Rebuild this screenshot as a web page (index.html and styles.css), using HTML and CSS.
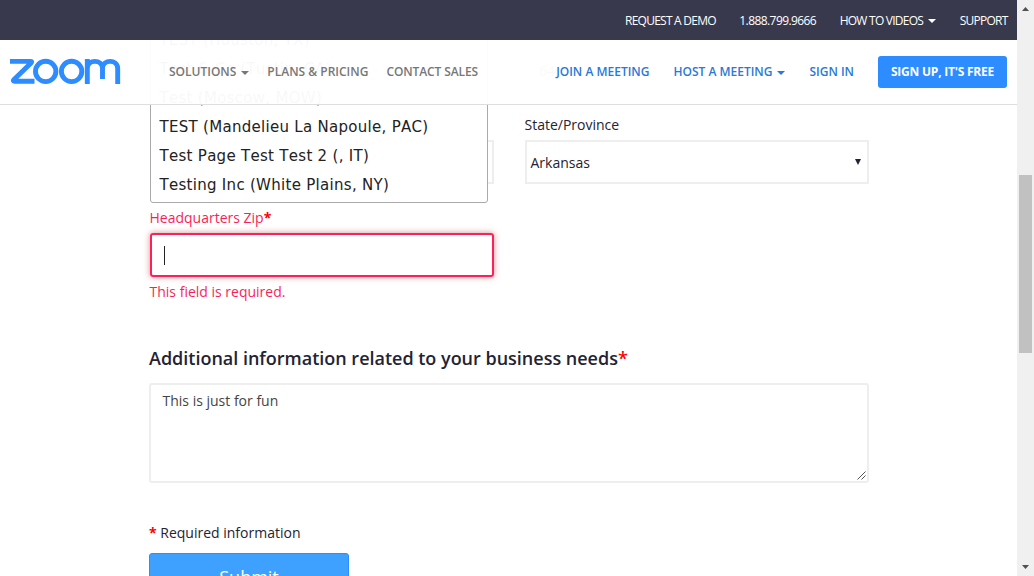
FILE: index.html
```html
<!DOCTYPE html>
<html lang="en">
<head>
<meta charset="utf-8">
<title>Zoom - Contact Sales</title>
<link rel="stylesheet" href="styles.css">
</head>
<body>
<div class="window">
  <div class="page">
    <header class="site-header">
      <nav class="topbar">
        <a class="demo">REQUEST A DEMO</a>
        <a class="phone">1.888.799.9666</a>
        <a class="videos">HOW TO VIDEOS<i class="caret"></i></a>
        <a class="support">SUPPORT</a>
      </nav>
      <nav class="navbar">
        <svg class="logo" viewBox="0 0 112 28" fill="none" stroke="#2d8cff" stroke-width="4.9">
          <path d="M0 3.4H20.5Q22.6 3.4 20.8 5.2L4 21.5Q2.3 23.3 4.8 23.3H24.5" stroke-linejoin="round"/>
          <circle cx="35.7" cy="13.4" r="10.2"/>
          <circle cx="61.6" cy="13.4" r="10.2"/>
          <path d="M77.3 26V10.5C77.3 1 92.5 1 92.5 10.5V21M92.5 10.5C92.5 1 107.7 1 107.7 10.5V26M77.3 1V11"/>
        </svg>
        <div class="primary">
          <a class="solutions">SOLUTIONS<i class="caret"></i></a>
          <a class="plans">PLANS &amp; PRICING</a>
          <a class="contact">CONTACT SALES</a>
        </div>
        <div class="account">
          <a class="join">JOIN A MEETING</a>
          <a class="host">HOST A MEETING<i class="caret"></i></a>
          <a class="signin">SIGN IN</a>
          <a class="signup"><span>SIGN UP, IT'S FREE</span></a>
        </div>
      </nav>
    </header>
    <main class="form">
      <div class="row">
        <div class="field">
          <div class="label">&nbsp;</div>
          <div class="input"></div>
          <ul class="suggestions">
            <li>TEST (Houston, TX)</li>
            <li>Test &amp; Co (Tustin, CA)</li>
            <li>Test (Moscow, MOW)</li>
            <li>TEST (Mandelieu La Napoule, PAC)</li>
            <li>Test Page Test Test 2 (, IT)</li>
            <li>Testing Inc (White Plains, NY)</li>
          </ul>
        </div>
        <div class="field">
          <span class="scrolled-value">646</span>
          <div class="label"><span>State/Province</span></div>
          <div class="input select"><span>Arkansas</span>
            <svg class="arrow" viewBox="0 0 6 6"><path d="M0 0H6L3 6Z" fill="#232333"/></svg>
          </div>
        </div>
      </div>
      <div class="field zip">
        <div class="label"><span>Headquarters Zip</span><b class="req">*</b></div>
        <div class="input invalid"><i class="cursor"></i></div>
        <div class="error"><span>This field is required.</span></div>
      </div>
      <h2 class="heading"><span>Additional information related to your business needs</span><b class="req">*</b></h2>
      <div class="textarea"><span>This is just for fun</span>
        <svg class="grip" viewBox="0 0 9 9"><path d="M0.5 8.5L8.5 0.5M4.5 8.5L8.5 4.5" stroke="#555"/></svg>
      </div>
      <p class="note"><b class="req">*</b> <span>Required information</span></p>
      <div class="submit"><span>Submit</span></div>
    </main>
  </div>
  <aside class="scrollbar">
    <svg class="up" viewBox="0 0 7 4"><path d="M0 4L3.5 0L7 4Z" fill="#505050"/></svg>
    <div class="thumb"></div>
    <svg class="down" viewBox="0 0 7 4"><path d="M0 0H7L3.5 4Z" fill="#505050"/></svg>
  </aside>
</div>
</body>
</html>
```
FILE: styles.css
```css
* { box-sizing: border-box; }
body { margin: 0; overflow: hidden; background: #fff; font-family: "Open Sans", "Noto Sans", sans-serif; }
a, span { white-space: nowrap; }
.window { display: flex; width: 1034px; height: 576px; overflow: hidden; }
.page { width: 1017px; height: 576px; overflow: hidden; }
.site-header { position: relative; z-index: 5; }
.topbar { display: flex; justify-content: flex-end; align-items: center; gap: 23.5px; height: 40px; padding-right: 9.5px; background: #39394d; color: #fff; font-size: 12px; letter-spacing: -0.75px; }
.phone { letter-spacing: -0.58px; }
.navbar { display: flex; align-items: center; height: 65px; padding: 0 10px; background: rgba(255, 255, 255, 0.97); border-bottom: 1px solid #dedede; font-size: 12px; font-weight: 600; }
.caret { display: inline-block; margin-left: 5px; vertical-align: 2px; border: 4px solid transparent; border-top-color: currentColor; border-bottom: 0; }
.primary .caret, .account .caret { vertical-align: 1px; }
.logo { width: 112px; height: 28px; }
.primary { display: flex; gap: 18px; margin-left: 47px; padding-bottom: 2px; color: #777; }
.contact { letter-spacing: -0.1px; }
.account { display: flex; align-items: center; gap: 24px; margin-left: auto; color: #2a78d8; }
.join, .host, .signin { padding-bottom: 2px; }
.signup { display: flex; align-items: center; justify-content: center; width: 129px; height: 32px; padding-bottom: 2px; border-radius: 3px; background: #2d8cff; color: #fff; font-weight: 700; letter-spacing: -0.22px; }
.form { padding: 10px 0 0 149px; font-size: 14px; color: #232333; }
.row { display: flex; gap: 31px; padding-left: 1px; }
.field { position: relative; width: 344px; }
.label { height: 20px; margin-bottom: 5px; line-height: 20px; }
.label, .error { text-indent: -0.5px; }
.input { width: 344px; height: 44px; border: 2px solid #eee; }
.select { display: flex; align-items: center; justify-content: space-between; padding: 0 6px 0 3.5px; }
.arrow { width: 6px; height: 6px; }
.scrolled-value { position: absolute; left: 14px; bottom: 103px; line-height: 20px; color: #444; }
.suggestions { position: absolute; left: 0; bottom: -19px; width: 338px; margin: 0; padding: 0 8.5px 2px; list-style: none; background: #fff; border: 1px solid #aaa; border-radius: 3px; color: #222; font: 15px/29px "DejaVu Sans", sans-serif; font-kerning: none; letter-spacing: 0.29px; white-space: nowrap; }
.zip { margin: 24px 0 0 1px; color: #fa1e5a; }
.req { color: #f00; }
.invalid { display: flex; align-items: center; border-color: #ff1f5a; border-radius: 3px; box-shadow: 0 0 6px rgba(185, 74, 72, 0.6); padding-left: 12px; }
.cursor { width: 1px; height: 19px; background: #222; }
.error { margin-top: 5px; line-height: 20px; }
.heading { margin: 43px 0 12px; font-size: 18px; line-height: 26px; font-weight: 600; letter-spacing: -0.01px; }
.heading .req { font-weight: 600; }
.textarea { display: flex; justify-content: space-between; width: 720px; height: 100px; padding: 5px 1px 1px 11.5px; border: 2px solid #eee; border-radius: 3px; color: #444; line-height: 22px; }
.grip { width: 9px; height: 9px; align-self: flex-end; }
.note { margin: 40px 0 10px; line-height: 20px; }
.submit { width: 200px; height: 46px; border: 1px solid #2d8cff; border-radius: 3px; background: #3fa1ff; color: #fff; font-size: 18px; line-height: 46px; text-align: center; }
.scrollbar { display: flex; flex-direction: column; align-items: center; width: 17px; height: 576px; padding: 7px 0; background: #f0f0f0; }
.up, .down { width: 7px; height: 4px; }
.thumb { width: 13px; height: 178px; margin-top: 164px; background: #c1c1c1; }
.down { margin-top: auto; }
```
